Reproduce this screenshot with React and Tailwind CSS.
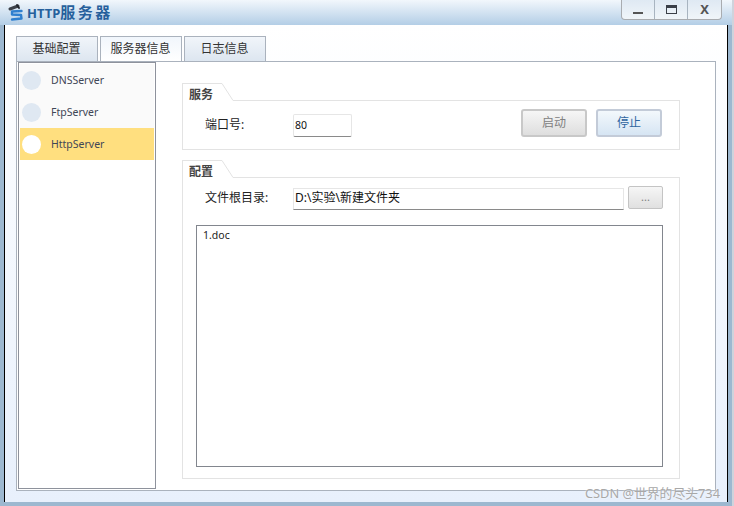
import React from 'react';

const base = '[font-family:"Noto_Sans","Noto_Sans_CJK_SC",sans-serif]';

const Logo = () => (
  <svg width="16" height="20" viewBox="0 0 16 20" fill="none" strokeLinecap="round">
    <path d="M2 6 L10 3" stroke="#3d424a" strokeWidth="3" />
    <path d="M9 2 L11 5" stroke="#23272e" strokeWidth="2" />
    <path d="M13.5 8 L4 8.5 L4 11.5 L13 12 L13.5 15.5 L4 16.5" stroke="#2f7fcf" strokeWidth="2.4" strokeLinejoin="round" />
  </svg>
);

const Server = ({ name, active }) => (
  <div className={`h-8 flex items-center pl-[2px] ${active ? 'bg-[#ffdf7f]' : ''}`}>
    <span className={`w-[19px] h-[19px] rounded-full ${active ? 'bg-white' : 'bg-[#dfe8f2]'}`} />
    <span className="ml-[10px] pt-[1px] text-[10.5px] text-[#3f4656]">{name}</span>
  </div>
);

const Tab = ({ label, active }) => (
  <div
    className={`w-[82px] h-[25px] pr-[1px] border border-b-0 border-[#aab2bd] flex items-center justify-center text-[12px] text-[#333] ${
      active ? 'bg-gradient-to-b from-[#f1f6fc] to-white' : 'bg-gradient-to-b from-[#f1f5fa] to-[#dde6f0]'
    }`}
  >
    {label}
  </div>
);

const Group = ({ title, className, children }) => (
  <div className={`flex flex-col ${className}`}>
    <div className="flex h-[18px] -mb-[1px] relative">
      <div className="w-[40px] h-[18px] bg-white border-t border-l border-[#e3e3e3] pl-[6px] pt-[3px] text-[12px] leading-[15px] font-bold text-[#444]">
        {title}
      </div>
      <svg width="12" height="18" viewBox="0 0 12 18" className="block bg-white">
        <path d="M0 0.5 L11 17.5 L12 17.5" fill="none" stroke="#e3e3e3" />
      </svg>
    </div>
    <div className="flex-1 border border-[#e3e3e3]">{children}</div>
  </div>
);

const WinButton = ({ children, last }) => (
  <div className={`w-[33px] flex items-center justify-center ${last ? '' : 'border-r border-[#a8b4c0]'}`}>{children}</div>
);

export default function App() {
  return (
    <div className={`${base} relative w-[734px] h-[506px] overflow-hidden flex flex-col bg-[#9db8d0] border-r-2 border-[#cfd3dc]`}>
      {/* title bar */}
      <div className="h-[25px] shrink-0 flex bg-gradient-to-b from-[#f2f7fc] to-[#b3cee6]">
        <div className="pl-[8px] pt-[3px]">
          <Logo />
        </div>
        <div className="ml-[3px] pt-[3px] text-[13px] leading-[18px] font-bold text-[#26609c]">
          HTTP<span className="text-[15px] tracking-[2.5px]">服务器</span>
        </div>
        <div className="ml-auto mr-[10px] h-[20px] flex border border-t-0 border-[#a9acb0] rounded-b-[4px] bg-gradient-to-b from-[#dfe9f3] to-[#f0f5f9]">
          <WinButton><span className="block w-[10px] h-[2px] mt-[7px] bg-[#555]" /></WinButton>
          <WinButton><span className="block w-[11px] h-[9px] border border-t-[3px] border-[#3a3f48]" /></WinButton>
          <WinButton last><span className="text-[13px] leading-none font-bold text-[#555]">X</span></WinButton>
        </div>
      </div>

      {/* client area */}
      <div className="flex-1 min-h-0 flex ml-[4px] mr-[4px] mb-[4px] border-l border-r border-black bg-gradient-to-b from-white to-[#e8f0fc]">
        <div className="flex-1 min-w-0 flex flex-col px-[11px]">
          <div className="flex gap-[2px] mt-[11px] shrink-0">
            <Tab label="基础配置" />
            <Tab label="服务器信息" active />
            <Tab label="日志信息" />
          </div>
          <div className="h-[430px] shrink-0 flex bg-white border border-[#aab2bd] pl-[1px]">
            {/* server list */}
            <div className="w-[138px] h-[427px] border border-[#8e929c] p-[1px] bg-white">
              <div className="h-[96px] bg-[#fafafa]">
                <Server name="DNSServer" />
                <Server name="FtpServer" />
                <Server name="HttpServer" active />
              </div>
            </div>

            {/* detail */}
            <div className="ml-[26px] mt-[21px] w-[498px] flex flex-col">
              <Group title="服务" className="h-[67px]">
                <div className="flex items-start pl-[22px] pr-[17px]">
                  <span className="w-[88px] mt-[15px] text-[12px] leading-[18px] text-[#222]">端口号:</span>
                  <div className="w-[59px] h-[23px] mt-[13px] border border-[#e6e6e6] border-b-[#8a8a8a] rounded-[2px] pl-[1px] text-[10.5px] leading-[21px] text-[#111]">80</div>
                  <button className="ml-auto mt-[8px] w-[66px] h-[28px] border-2 border-[#c8c8c8] rounded-[3px] bg-gradient-to-b from-[#f6f6f6] to-[#dedede] text-[12px] text-[#808080]">启动</button>
                  <button className="ml-[9px] mt-[8px] w-[66px] h-[28px] border-2 border-[#c3cbd8] rounded-[3px] bg-gradient-to-b from-[#f3f8fc] to-[#d6e5f3] text-[12px] text-[#2f659f]">停止</button>
                </div>
              </Group>
              <Group title="配置" className="h-[319px] mt-[10px]">
                <div className="pl-[13px] pr-[16px]">
                  <div className="flex items-start mt-[10px]">
                    <span className="pl-[9px] w-[97px] mt-[1px] text-[12px] leading-[18px] text-[#222]">文件根目录:</span>
                    <div className="w-[331px] h-[22px] border border-[#e6e6e6] border-b-[#8a8a8a] pl-[1px] text-[12px] leading-[18px] text-[#111]">D:\实验\新建文件夹</div>
                    <button className="ml-[4px] -mt-[2px] w-[35px] h-[23px] border border-[#c4c4c4] rounded-[2px] bg-gradient-to-b from-[#f6f6f6] to-[#e0e0e0] text-[11px] text-[#808080]">...</button>
                  </div>
                  <div className="w-[467px] h-[242px] mt-[15px] border border-[#82868e] pl-[6px] pt-[1px] text-[10.5px] leading-[16px] text-[#222]">1.doc</div>
                </div>
              </Group>
            </div>
          </div>
        </div>
      </div>

      {/* watermark */}
      <span className="absolute left-[585px] top-[486px] text-[12.8px] leading-[14px] whitespace-nowrap text-[#a8a8a8] [text-shadow:0_0_2px_#fff]">CSDN @世界的尽头734</span>
    </div>
  );
}
